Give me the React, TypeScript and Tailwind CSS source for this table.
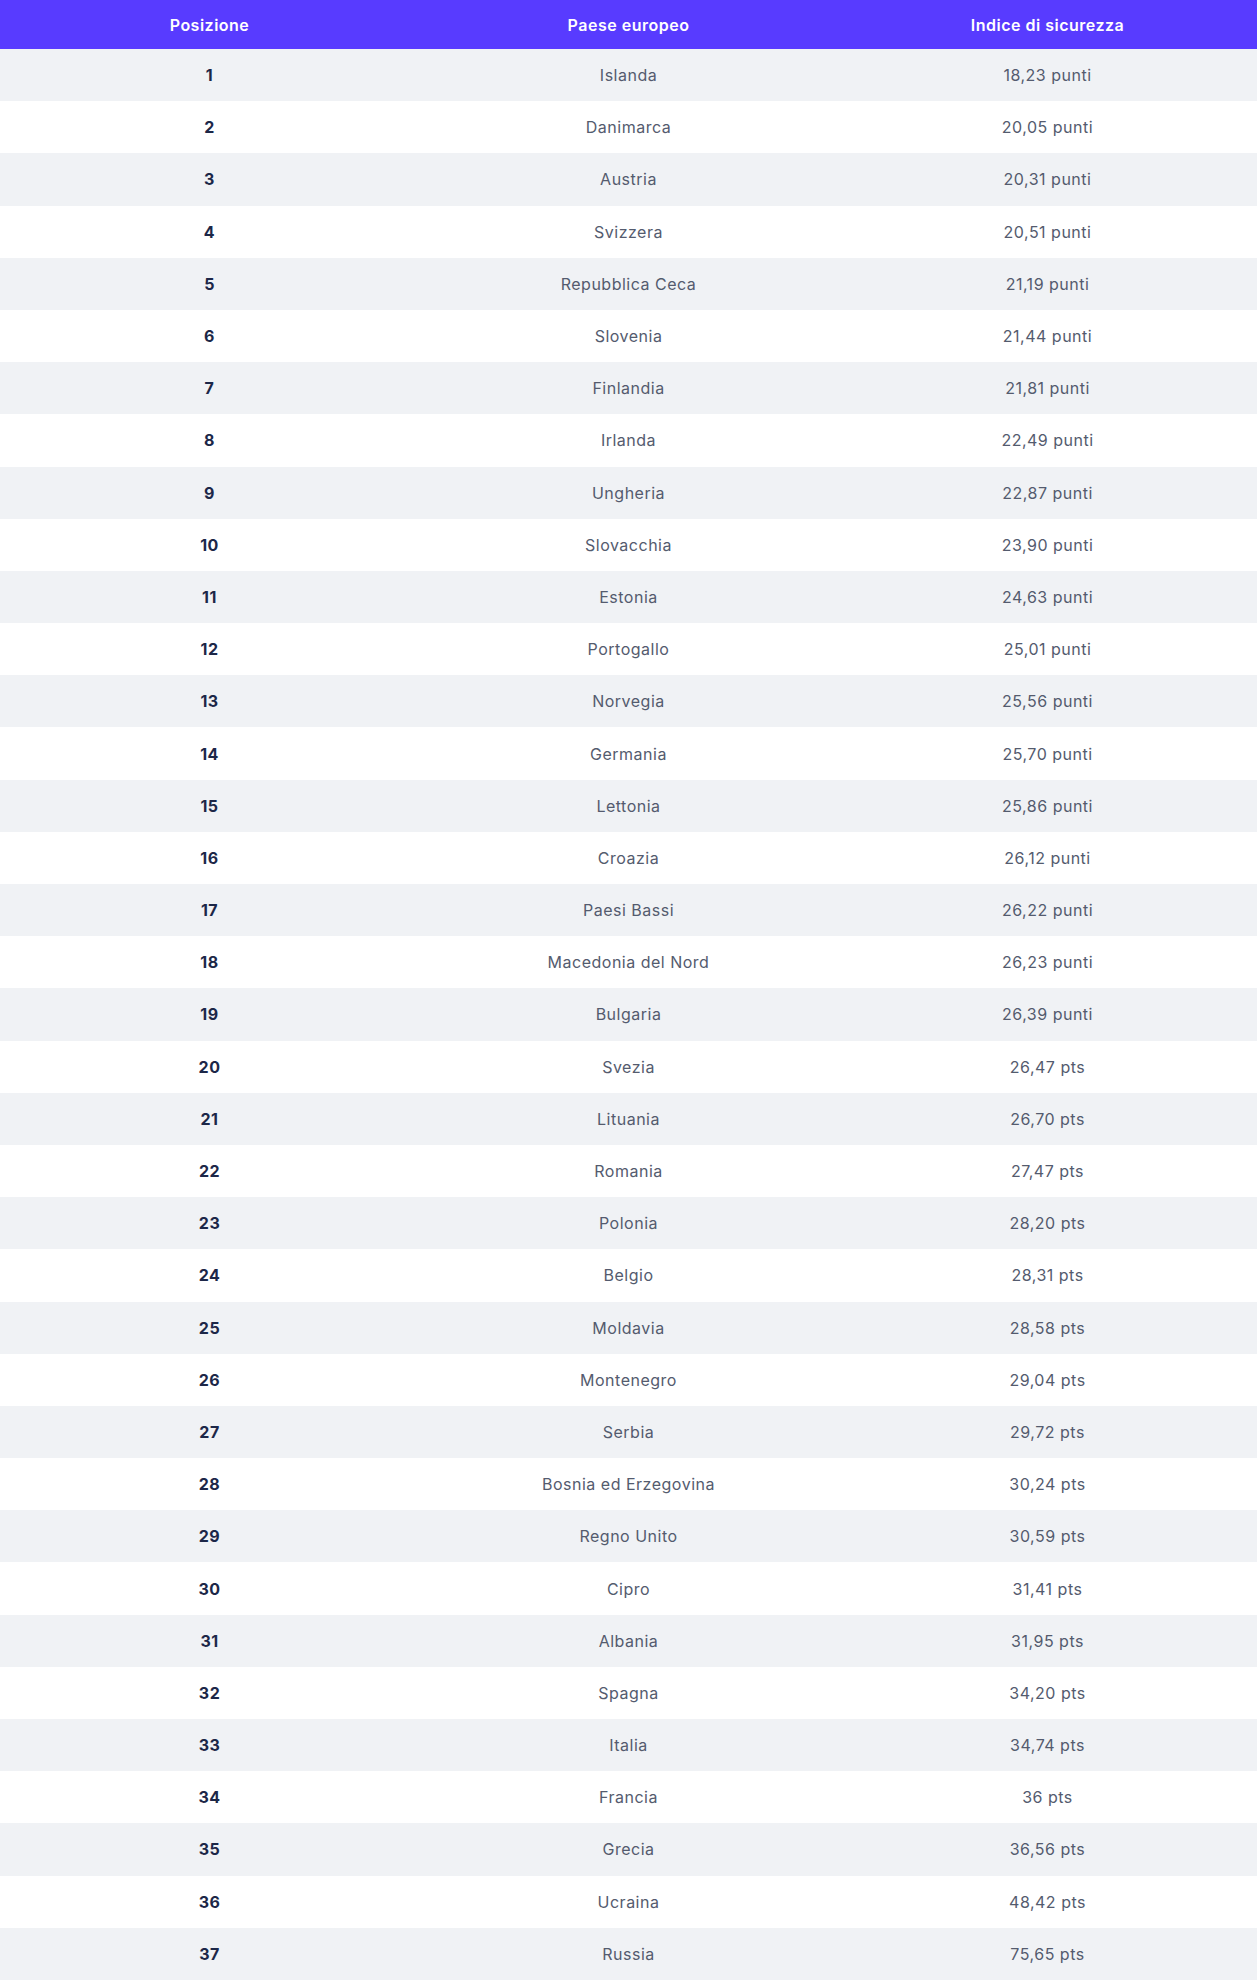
const rows: [string, string][] = [
  ['Islanda', '18,23 punti'],
  ['Danimarca', '20,05 punti'],
  ['Austria', '20,31 punti'],
  ['Svizzera', '20,51 punti'],
  ['Repubblica Ceca', '21,19 punti'],
  ['Slovenia', '21,44 punti'],
  ['Finlandia', '21,81 punti'],
  ['Irlanda', '22,49 punti'],
  ['Ungheria', '22,87 punti'],
  ['Slovacchia', '23,90 punti'],
  ['Estonia', '24,63 punti'],
  ['Portogallo', '25,01 punti'],
  ['Norvegia', '25,56 punti'],
  ['Germania', '25,70 punti'],
  ['Lettonia', '25,86 punti'],
  ['Croazia', '26,12 punti'],
  ['Paesi Bassi', '26,22 punti'],
  ['Macedonia del Nord', '26,23 punti'],
  ['Bulgaria', '26,39 punti'],
  ['Svezia', '26,47 pts'],
  ['Lituania', '26,70 pts'],
  ['Romania', '27,47 pts'],
  ['Polonia', '28,20 pts'],
  ['Belgio', '28,31 pts'],
  ['Moldavia', '28,58 pts'],
  ['Montenegro', '29,04 pts'],
  ['Serbia', '29,72 pts'],
  ['Bosnia ed Erzegovina', '30,24 pts'],
  ['Regno Unito', '30,59 pts'],
  ['Cipro', '31,41 pts'],
  ['Albania', '31,95 pts'],
  ['Spagna', '34,20 pts'],
  ['Italia', '34,74 pts'],
  ['Francia', '36 pts'],
  ['Grecia', '36,56 pts'],
  ['Ucraina', '48,42 pts'],
  ['Russia', '75,65 pts'],
];

export default function App() {
  return (
    <div className="w-[1257px] h-[1980px] flex flex-col bg-white font-['Inter','Liberation_Sans',sans-serif] text-[16px]">
      {/* intestazione */}
      <div className="h-[49px] shrink-0 grid grid-cols-3 items-center bg-[#583bff] text-white font-semibold tracking-[0.5px]">
        <div className="text-center">Posizione</div>
        <div className="text-center">Paese europeo</div>
        <div className="text-center">Indice di sicurezza</div>
      </div>

      {rows.map(([country, score], idx) => (
        <div
          key={country}
          className={`flex-1 grid grid-cols-3 items-center ${idx % 2 === 0 ? 'bg-[#f0f2f5]' : 'bg-white'}`}
        >
          <div className="text-center font-bold text-[#1c2748] tracking-[0.5px]">{idx + 1}</div>
          <div className="text-center text-[#545b6e] tracking-[0.5px]">{country}</div>
          <div className="text-center text-[#545b6e] tracking-[0.5px]">{score}</div>
        </div>
      ))}
    </div>
  );
}
